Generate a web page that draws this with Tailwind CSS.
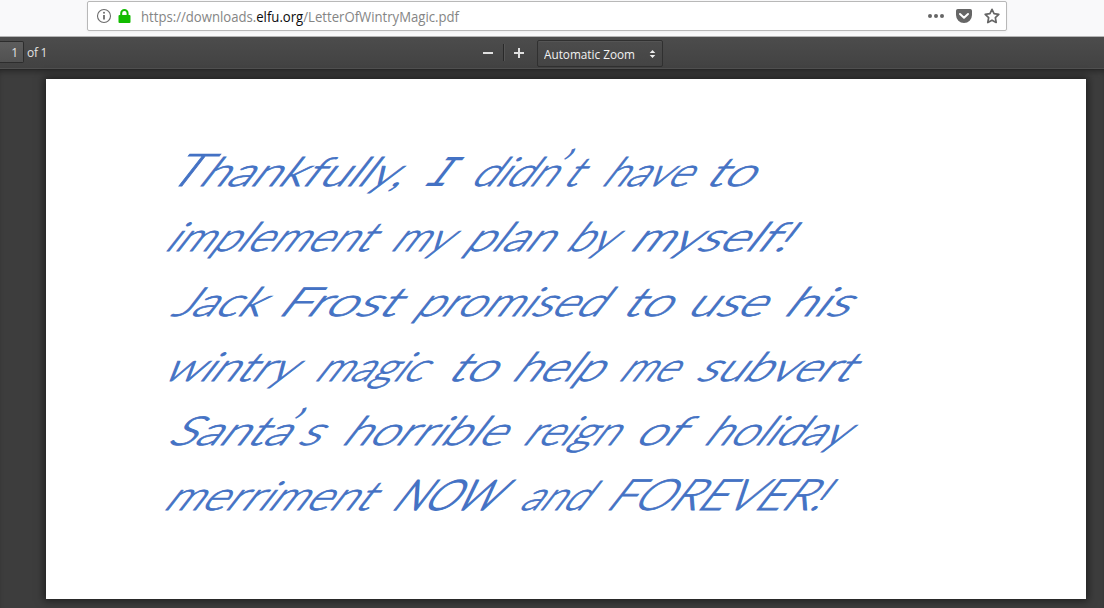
<!DOCTYPE html>
<html lang="en">
<head>
<meta charset="utf-8">
<title>LetterOfWintryMagic.pdf</title>
<script src="https://cdn.jsdelivr.net/npm/@tailwindcss/browser@4"></script>
</head>
<body class="w-[1104px] h-[608px] overflow-hidden bg-[#3b3b3b] font-['Open_Sans',sans-serif]">
<div class="flex flex-col h-full">
  <header class="h-[37px] shrink-0 bg-[#f9f9fa] border-b border-[#b5b5b5] pl-[87px] pt-px">
    <div class="w-[920px] h-[30px] bg-white border border-[#b8b8b8] rounded-[2px] shadow-[0_1px_3px_rgba(0,0,0,0.05)] flex items-center pl-[8px] pr-[6px]">
      <svg class="w-4 h-4 shrink-0" viewBox="0 0 16 16" fill="none" stroke="#6b6b6b"><circle cx="8" cy="8" r="6.5" stroke-width="1.1"/><path d="M8 7v4.5" stroke-width="1.8"/><circle cx="8" cy="4.7" r="1" fill="#6b6b6b" stroke="none"/></svg>
      <svg class="w-[13px] h-[14px] ml-[6px] shrink-0" viewBox="0 0 13 14"><path d="M3.2 7V4.3a3.2 3.2 0 0 1 6.4 0V7" fill="none" stroke="#12bc00" stroke-width="2"/><rect x=".5" y="6" width="12" height="8" rx="1" fill="#12bc00"/></svg>
      <svg class="w-[330px] h-[24px] ml-[10px] shrink-0" font-family="Open Sans, sans-serif" font-size="13.6" fill="#858585"><text x="0" y="18" textLength="318" lengthAdjust="spacingAndGlyphs">https://downloads.<tspan fill="#0c0c0d">elfu.org</tspan>/LetterOfWintryMagic.pdf</text></svg>
      <div class="ml-auto flex items-center gap-[12px]">
        <svg class="w-4 h-4" viewBox="0 0 16 16" fill="#666"><circle cx="2" cy="8" r="2"/><circle cx="8" cy="8" r="2"/><circle cx="14" cy="8" r="2"/></svg>
        <svg class="w-4 h-4" viewBox="0 0 16 16"><path d="M1.8 1h12.4A1.8 1.8 0 0 1 16 2.800V7A8 8 0 0 1 0 7V2.800A1.8 1.800 0 0 1 1.800 1z" fill="#666"/><path d="M4 6l4 3.800L12 6" fill="none" stroke="#fff" stroke-width="2" stroke-linecap="round" stroke-linejoin="round"/></svg>
        <svg class="w-4 h-4" viewBox="0 0 16 16"><path d="M8 1.300l2.050 4.350 4.750.65-3.450 3.300.85 4.900L8 12.200 3.800 14.500l.85-4.900L1.200 6.300l4.750-.65z" fill="none" stroke="#666" stroke-width="1.700" stroke-linejoin="round"/></svg>
      </div>
    </div>
  </header>
  <div class="h-[32px] shrink-0 flex items-center bg-linear-to-b from-[#4c4c4c] to-[#424242] border-b border-[#505050] text-[12px] text-[#e2e2e2]">
    <div class="w-[24px] h-[22px] -mt-px shrink-0 border border-l-0 border-[#2d2d2d] rounded-r-[2px] bg-linear-to-b from-[#5d5d5d] to-[#515151] flex items-center justify-end pr-[5px] pt-[2px]">1</div>
    <div class="ml-[3px] pt-px w-[22px] whitespace-nowrap tracking-[-0.3px]">of 1</div>
    <svg class="w-[12px] h-[12px] ml-[433px] shrink-0" viewBox="0 0 12 12"><path d="M1 6h10" stroke="#e0e0e0" stroke-width="2"/></svg>
    <div class="w-px h-[17px] ml-[9px] bg-[#292929] shadow-[1px_0_0_#555]"></div>
    <svg class="w-[12px] h-[12px] ml-[9px] shrink-0" viewBox="0 0 12 12"><path d="M1 6h10M6 1v10" stroke="#e0e0e0" stroke-width="2"/></svg>
    <div class="w-[126px] h-[27px] ml-[12px] mt-[2px] border border-[#303030] rounded-[2px] bg-linear-to-b from-[#4c4c4c] to-[#444] shadow-[inset_0_1px_0_#555] flex items-center">
      <svg class="w-[96px] h-[20px] ml-[6px]" font-family="Open Sans, sans-serif" font-size="12" fill="#f2f2f2"><text x="0" y="15" textLength="91" lengthAdjust="spacingAndGlyphs">Automatic Zoom</text></svg>
      <svg class="w-[7px] h-[8px] ml-[9px]" viewBox="0 0 7 8" fill="#eee"><path d="M3.500 0L6.300 3H.7zM3.500 8L6.300 5H.7z"/></svg>
    </div>
  </div>
  <main class="grow bg-[#3d3d3d] border-t border-[#282828] shadow-[inset_0_4px_6px_-3px_rgba(0,0,0,0.4)] pl-[46px] pt-[9px]">
    <article class="w-[1040px] h-[520px] bg-white shadow-[0_0_8px_2px_rgba(0,0,0,0.5)]">
      <svg class="w-[1040px] h-[520px]" viewBox="46 79 1040 520" font-family="Lato, sans-serif" font-size="38" font-weight="300" fill="#4472c4" stroke="#4472c4" stroke-width=".8">
        <g transform="translate(-4 186) skewX(-38) scale(1 1.050)"><text x="168" textLength="236" lengthAdjust="spacingAndGlyphs"><tspan font-size="43">T</tspan>hankfully,</text> <text x="425" font-family="Liberation Mono, monospace" font-weight="400" font-size="42" stroke="none">I</text> <text x="473" textLength="107" lengthAdjust="spacingAndGlyphs">didn<tspan dx="-10" dy="-7">’</tspan><tspan dx="10" dy="7">t</tspan></text> <text x="604" textLength="87" lengthAdjust="spacingAndGlyphs">have</text> <text x="707" textLength="47" lengthAdjust="spacingAndGlyphs">to</text></g>
        <g transform="translate(-4 250.500) skewX(-38) scale(1 1.050)"><text x="167" textLength="205" lengthAdjust="spacingAndGlyphs">implement</text> <text x="393" textLength="57" lengthAdjust="spacingAndGlyphs">my</text> <text x="467" textLength="86" lengthAdjust="spacingAndGlyphs">plan</text> <text x="568" textLength="46" lengthAdjust="spacingAndGlyphs">by</text> <text x="632" textLength="157" lengthAdjust="spacingAndGlyphs">myself!</text></g>
        <g transform="translate(-4 315.500) skewX(-38) scale(1 1.050)"><text x="174" textLength="88" lengthAdjust="spacingAndGlyphs">Jack</text> <text x="280" textLength="118" lengthAdjust="spacingAndGlyphs">Frost</text> <text x="417" textLength="186" lengthAdjust="spacingAndGlyphs">promised</text> <text x="624" textLength="47" lengthAdjust="spacingAndGlyphs">to</text> <text x="689" textLength="76" lengthAdjust="spacingAndGlyphs">use</text> <text x="786" textLength="64" lengthAdjust="spacingAndGlyphs">his</text></g>
        <g transform="translate(-4 380.500) skewX(-38) scale(1 1.050)"><text x="165" textLength="129" lengthAdjust="spacingAndGlyphs">wintry</text> <text x="317" textLength="108" lengthAdjust="spacingAndGlyphs">magic</text> <text x="449" textLength="47" lengthAdjust="spacingAndGlyphs">to</text> <text x="514" textLength="88" lengthAdjust="spacingAndGlyphs">help</text> <text x="621" textLength="56" lengthAdjust="spacingAndGlyphs">me</text> <text x="698" textLength="154" lengthAdjust="spacingAndGlyphs">subvert</text></g>
        <g transform="translate(-4 445) skewX(-38) scale(1 1.050)"><text x="170" textLength="151" lengthAdjust="spacingAndGlyphs">Santa<tspan dx="-11" dy="-7">’</tspan><tspan dx="11" dy="7">s</tspan></text> <text x="344" textLength="161" lengthAdjust="spacingAndGlyphs">horrible</text> <text x="525" textLength="93" lengthAdjust="spacingAndGlyphs">reign</text> <text x="637" textLength="45" lengthAdjust="spacingAndGlyphs">of</text> <text x="706" textLength="141" lengthAdjust="spacingAndGlyphs">holiday</text></g>
        <g transform="translate(-4 510) skewX(-38) scale(1 1.050)"><text x="166" textLength="206" lengthAdjust="spacingAndGlyphs">merriment</text> <text x="394" textLength="103" lengthAdjust="spacingAndGlyphs" font-size="40" stroke-width="1.300">NOW</text> <text x="522" textLength="65" lengthAdjust="spacingAndGlyphs">and</text> <text x="608" textLength="215" lengthAdjust="spacingAndGlyphs" font-size="41">FOREVER!</text></g>
      </svg>
    </article>
  </main>
</div>
</body>
</html>
